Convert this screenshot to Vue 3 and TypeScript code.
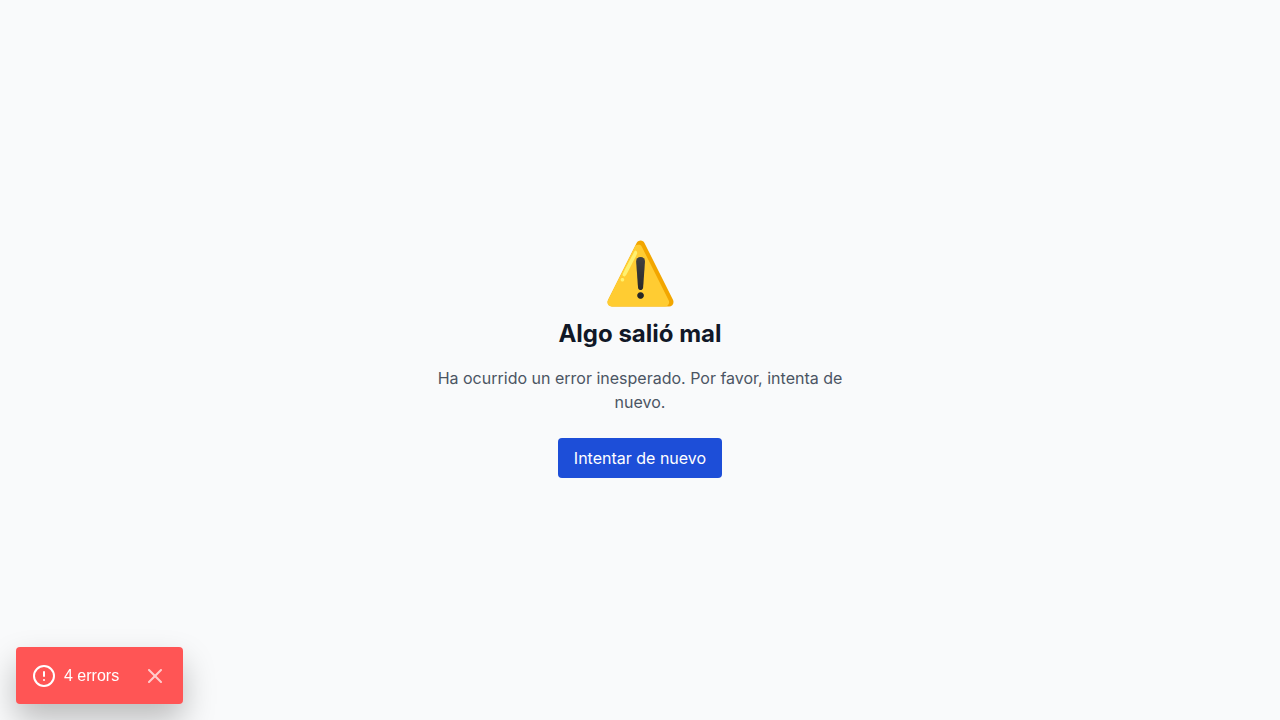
<script setup lang="ts">
import { ref } from 'vue'

const errorCount = ref<number>(4)
const toastVisible = ref<boolean>(true)

function retry(): void {
  window.location.reload()
}
</script>

<template>
  <main class="page">
    <section class="panel">
      <div class="symbol" role="img" aria-label="Advertencia">⚠️</div>
      <h1 class="title">Algo salió mal</h1>
      <p class="message">Ha ocurrido un error inesperado. Por favor, intenta de nuevo.</p>
      <button class="retry" type="button" @click="retry">Intentar de nuevo</button>
    </section>

    <aside v-if="toastVisible" class="toast">
      <button class="toast-open" type="button">
        <svg width="24" height="24" viewBox="0 0 24 24" fill="none" stroke="currentColor" stroke-width="2" stroke-linecap="round" stroke-linejoin="round" aria-hidden="true">
          <circle cx="12" cy="12" r="10" />
          <line x1="12" y1="8" x2="12" y2="12" />
          <line x1="12" y1="16" x2="12.01" y2="16" />
        </svg>
        <span>{{ errorCount }} errors</span>
      </button>
      <button class="toast-close" type="button" aria-label="Hide Errors" @click="toastVisible = false">
        <svg width="24" height="24" viewBox="0 0 24 24" fill="none" stroke="currentColor" stroke-width="2" stroke-linecap="round" stroke-linejoin="round" aria-hidden="true">
          <path d="M18 6L6 18" />
          <path d="M6 6L18 18" />
        </svg>
      </button>
    </aside>
  </main>
</template>

<style>
body {
  margin: 0;
}
</style>

<style scoped>
.page {
  box-sizing: border-box;
  display: flex;
  align-items: center;
  justify-content: center;
  min-height: 100vh;
  background: #f9fafb;
  font-family: Inter, sans-serif;
  font-size: 16px;
  line-height: 24px;
}

.panel {
  box-sizing: border-box;
  width: 100%;
  max-width: 448px;
  padding: 0 16px;
  text-align: center;
}

.symbol {
  margin-bottom: 16px;
  font-size: 60px;
  line-height: 60px;
}

.title {
  margin: 0 0 16px;
  color: #111827;
  font-size: 24px;
  font-weight: 700;
  line-height: 32px;
}

.message {
  margin: 0 0 24px;
  color: #4b5563;
}

.retry {
  padding: 8px 16px;
  border: 0;
  border-radius: 4px;
  background: #1d4ed8;
  color: #fff;
  font: inherit;
  cursor: pointer;
}

.toast {
  position: fixed;
  bottom: 16px;
  left: 16px;
  display: flex;
  align-items: center;
  padding: 17px 16px 16px;
  border-radius: 4px;
  background: #ff5555;
  box-shadow: 0 16px 32px rgba(0, 0, 0, 0.25);
  color: #fff;
  font-family: "Liberation Sans", Arial, sans-serif;
}

.toast button {
  display: flex;
  align-items: center;
  padding: 0;
  border: 0;
  background: none;
  color: inherit;
  font: inherit;
  cursor: pointer;
}

.toast .toast-open {
  gap: 8px;
}

.toast .toast-close {
  margin-left: 24px;
  opacity: 0.7;
}
</style>
